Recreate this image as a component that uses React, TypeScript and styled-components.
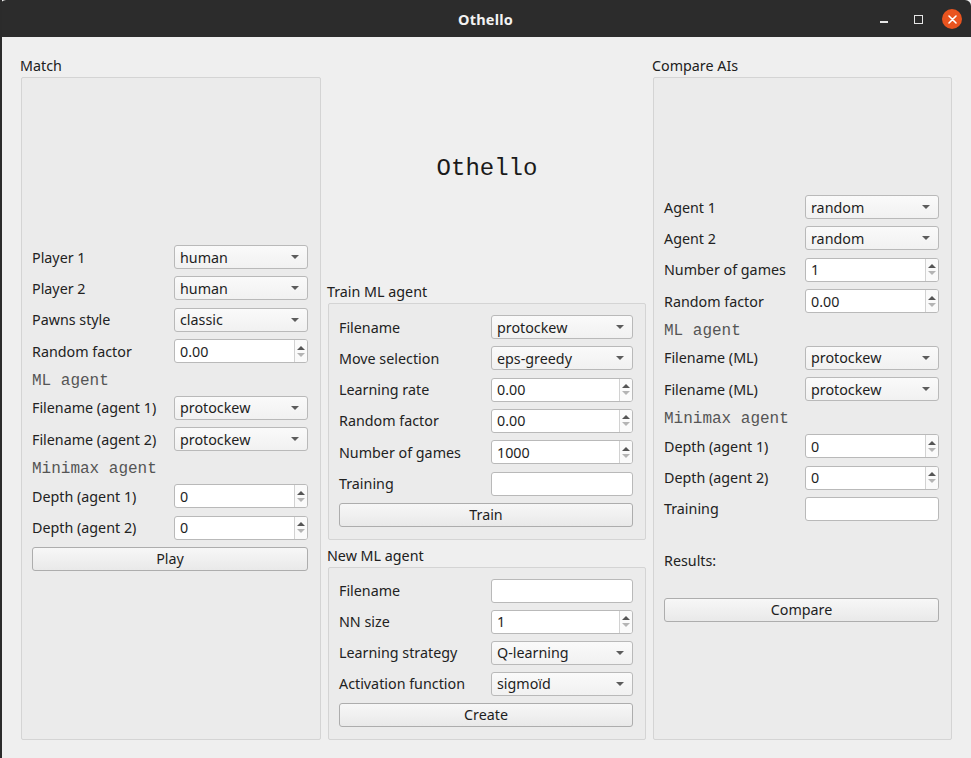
import React from "react";
import styled, { createGlobalStyle } from "styled-components";

const Global = createGlobalStyle`
  html, body { margin: 0; padding: 0; background: #efefef; }
  body { font-family: "Noto Sans", "DejaVu Sans", sans-serif; }
  * { box-sizing: border-box; }
`;

const MONO = `"Courier New", "Nimbus Mono PS", "FreeMono", "Liberation Mono", monospace`;

const Window = styled.div`
  width: 971px;
  height: 758px;
  display: flex;
  flex-direction: column;
  background: #efefef;
  border-left: 2px solid #2b2b2b;
  overflow: hidden;
`;

const TitleBar = styled.div`
  height: 37px;
  flex: none;
  background: #2c2c2c;
  margin-left: -2px;
  display: flex;
  align-items: center;
  justify-content: center;
  position: relative;
  border-radius: 6px 6px 0 0;
`;

const TitleText = styled.div`
  color: #f2f2f2;
  font-weight: 700;
  font-size: 14.5px;
  letter-spacing: 0.2px;
`;

const Controls = styled.div`
  position: absolute;
  right: 9px;
  top: 9px;
  display: flex;
  align-items: center;
`;

const CtrlBox = styled.div`
  width: 34px;
  height: 20px;
  display: flex;
  align-items: center;
  justify-content: center;
`;

const MinIcon = styled.div`
  width: 8px;
  height: 2px;
  background: #e6e6e6;
  margin-top: 5px;
`;

const MaxIcon = styled.div`
  width: 9px;
  height: 9px;
  border: 1.5px solid #e6e6e6;
`;

const CloseBtn = styled.div`
  width: 20px;
  height: 20px;
  border-radius: 50%;
  background: #e9541f;
  display: flex;
  align-items: center;
  justify-content: center;
  margin-left: 7px;
`;

const Content = styled.div`
  flex: 1;
  display: grid;
  grid-template-columns: 300px 318px 299px;
  column-gap: 7px;
  padding: 19px 0 18px 19px;
  min-height: 0;
`;

const Column = styled.div`
  display: flex;
  flex-direction: column;
  min-height: 0;
`;

const GroupTitle = styled.div<{ $mt?: number }>`
  flex: none;
  height: 20px;
  line-height: 20px;
  font-size: 14.3px;
  color: #202020;
  margin-bottom: 1px;
  margin-top: ${(p) => p.$mt ?? 0}px;
  margin-left: -1px;
`;

const Frame = styled.div<{ $padTop?: number; $grow?: boolean }>`
  border: 1px solid #d4d4d4;
  border-radius: 2px;
  background: #ebebeb;
  padding: ${(p) => p.$padTop ?? 11}px 12px 12px 10px;
  flex: ${(p) => (p.$grow ? "1 1 auto" : "none")};
`;

const Form = styled.div<{ $gap?: number }>`
  display: flex;
  flex-direction: column;
  gap: ${(p) => p.$gap ?? 7.4}px;
`;

const Row = styled.div<{ $labelW: number }>`
  display: grid;
  grid-template-columns: ${(p) => p.$labelW}px 1fr;
  align-items: center;
  height: 24px;
`;

const Label = styled.div`
  font-size: 14.3px;
  color: #222;
  white-space: nowrap;
`;

const SectionLabel = styled.div`
  height: 18px;
  line-height: 18px;
  padding-top: 1px;
  font-family: ${MONO};
  font-size: 16px;
  color: #555;
  white-space: nowrap;
`;

const FieldBase = styled.div`
  height: 24px;
  border: 1px solid #b9b9b9;
  border-radius: 3px;
  font-size: 14.3px;
  color: #1e1e1e;
  display: flex;
  align-items: center;
`;

const Combo = styled(FieldBase)`
  background: linear-gradient(#fafafa, #f1f1f1);
  padding-left: 5px;
  justify-content: space-between;
`;

const ComboArrow = styled.div`
  width: 0;
  height: 0;
  border-left: 4px solid transparent;
  border-right: 4px solid transparent;
  border-top: 4px solid #5c5c5c;
  margin-right: 8px;
`;

const LineEdit = styled(FieldBase)`
  background: #fff;
  padding-left: 5px;
`;

const Spin = styled(FieldBase)`
  background: #fff;
  padding-left: 5px;
  justify-content: space-between;
  align-items: stretch;
`;

const SpinValue = styled.div`
  display: flex;
  align-items: center;
`;

const SpinArrows = styled.div`
  width: 13px;
  border-left: 1px solid #d2d2d2;
  display: flex;
  flex-direction: column;
  align-items: center;
  justify-content: center;
  gap: 3px;
  background: #fafafa;
  border-radius: 0 2px 2px 0;
`;

const Tri = styled.div<{ $up?: boolean }>`
  width: 0;
  height: 0;
  border-left: 4px solid transparent;
  border-right: 4px solid transparent;
  ${(p) =>
    p.$up
      ? "border-bottom: 4px solid #555;"
      : "border-top: 4px solid #b4b4b4;"}
`;

const PushButton = styled.div`
  height: 24px;
  border: 1px solid #adadad;
  border-radius: 3px;
  background: linear-gradient(#f7f7f7, #e9e9e9);
  font-size: 14.3px;
  color: #1e1e1e;
  display: flex;
  align-items: center;
  justify-content: center;
`;

const TitleArea = styled.div`
  flex: none;
  height: 226px;
  display: flex;
  align-items: center;
  justify-content: center;
  padding-bottom: 2px;
`;

const BigTitle = styled.div`
  font-family: ${MONO};
  font-size: 24px;
  color: #1a1a1a;
`;

const Spacer = styled.div<{ $h: number }>`
  height: ${(p) => p.$h}px;
  flex: none;
`;

const ResultsRow = styled.div`
  height: 18px;
  line-height: 18px;
  font-size: 14.3px;
  color: #222;
`;

type Field =
  | { kind: "combo"; label: string; value: string }
  | { kind: "spin"; label: string; value: string }
  | { kind: "line"; label: string }
  | { kind: "section"; text: string };

const renderField = (f: Field, labelW: number, i: number) => {
  if (f.kind === "section") return <SectionLabel key={i}>{f.text}</SectionLabel>;
  return (
    <Row $labelW={labelW} key={i}>
      <Label>{f.label}</Label>
      {f.kind === "combo" && (
        <Combo>
          <span>{f.value}</span>
          <ComboArrow />
        </Combo>
      )}
      {f.kind === "spin" && (
        <Spin>
          <SpinValue>{f.value}</SpinValue>
          <SpinArrows>
            <Tri $up />
            <Tri />
          </SpinArrows>
        </Spin>
      )}
      {f.kind === "line" && <LineEdit />}
    </Row>
  );
};

const matchFields: Field[] = [
  { kind: "combo", label: "Player 1", value: "human" },
  { kind: "combo", label: "Player 2", value: "human" },
  { kind: "combo", label: "Pawns style", value: "classic" },
  { kind: "spin", label: "Random factor", value: "0.00" },
  { kind: "section", text: "ML agent" },
  { kind: "combo", label: "Filename (agent 1)", value: "protockew" },
  { kind: "combo", label: "Filename (agent 2)", value: "protockew" },
  { kind: "section", text: "Minimax agent" },
  { kind: "spin", label: "Depth (agent 1)", value: "0" },
  { kind: "spin", label: "Depth (agent 2)", value: "0" },
];

const trainFields: Field[] = [
  { kind: "combo", label: "Filename", value: "protockew" },
  { kind: "combo", label: "Move selection", value: "eps-greedy" },
  { kind: "spin", label: "Learning rate", value: "0.00" },
  { kind: "spin", label: "Random factor", value: "0.00" },
  { kind: "spin", label: "Number of games", value: "1000" },
  { kind: "line", label: "Training" },
];

const newFields: Field[] = [
  { kind: "line", label: "Filename" },
  { kind: "spin", label: "NN size", value: "1" },
  { kind: "combo", label: "Learning strategy", value: "Q-learning" },
  { kind: "combo", label: "Activation function", value: "sigmoïd" },
];

const compareFields: Field[] = [
  { kind: "combo", label: "Agent 1", value: "random" },
  { kind: "combo", label: "Agent 2", value: "random" },
  { kind: "spin", label: "Number of games", value: "1" },
  { kind: "spin", label: "Random factor", value: "0.00" },
  { kind: "section", text: "ML agent" },
  { kind: "combo", label: "Filename (ML)", value: "protockew" },
  { kind: "combo", label: "Filename (ML)", value: "protockew" },
  { kind: "section", text: "Minimax agent" },
  { kind: "spin", label: "Depth (agent 1)", value: "0" },
  { kind: "spin", label: "Depth (agent 2)", value: "0" },
  { kind: "line", label: "Training" },
];

export default function App() {
  return (
    <>
      <Global />
      <Window>
        <TitleBar>
          <TitleText>Othello</TitleText>
          <Controls>
            <CtrlBox>
              <MinIcon />
            </CtrlBox>
            <CtrlBox>
              <MaxIcon />
            </CtrlBox>
            <CloseBtn>
              <svg width="9" height="9" viewBox="0 0 9 9">
                <path d="M1 1L8 8M8 1L1 8" stroke="#fff" strokeWidth="1.6" strokeLinecap="round" />
              </svg>
            </CloseBtn>
          </Controls>
        </TitleBar>
        <Content>
          <Column>
            <GroupTitle>Match</GroupTitle>
            <Frame $padTop={167} $grow>
              <Form>
                {matchFields.map((f, i) => renderField(f, 142, i))}
                <PushButton>Play</PushButton>
              </Form>
            </Frame>
          </Column>
          <Column>
            <TitleArea>
              <BigTitle>Othello</BigTitle>
            </TitleArea>
            <GroupTitle>Train ML agent</GroupTitle>
            <Frame $padTop={11}>
              <Form $gap={7.33}>
                {trainFields.map((f, i) => renderField(f, 152, i))}
                <PushButton>Train</PushButton>
              </Form>
            </Frame>
            <GroupTitle $mt={6}>New ML agent</GroupTitle>
            <Frame $grow $padTop={11}>
              <Form $gap={7}>
                {newFields.map((f, i) => renderField(f, 152, i))}
                <PushButton>Create</PushButton>
              </Form>
            </Frame>
          </Column>
          <Column>
            <GroupTitle>Compare AIs</GroupTitle>
            <Frame $padTop={117} $grow>
              <Form>
                {compareFields.map((f, i) => renderField(f, 141, i))}
              </Form>
              <Spacer $h={31} />
              <ResultsRow>Results:</ResultsRow>
              <Spacer $h={28} />
              <PushButton>Compare</PushButton>
            </Frame>
          </Column>
        </Content>
      </Window>
    </>
  );
}
